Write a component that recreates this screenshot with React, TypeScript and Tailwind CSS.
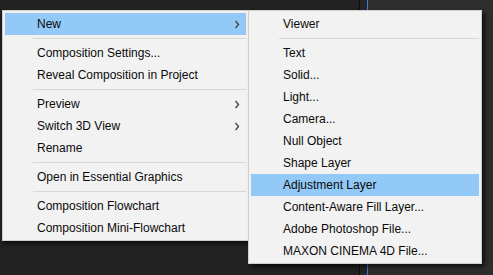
import React from 'react';

// Menu row types
type Row = { label: string; sub?: boolean; active?: boolean } | 'sep';

const mainRows: Row[] = [
  { label: 'New', sub: true, active: true },
  'sep',
  { label: 'Composition Settings...' },
  { label: 'Reveal Composition in Project' },
  'sep',
  { label: 'Preview', sub: true },
  { label: 'Switch 3D View', sub: true },
  { label: 'Rename' },
  'sep',
  { label: 'Open in Essential Graphics' },
  'sep',
  { label: 'Composition Flowchart' },
  { label: 'Composition Mini-Flowchart' },
];

const newRows: Row[] = [
  { label: 'Viewer' },
  'sep',
  { label: 'Text' },
  { label: 'Solid...' },
  { label: 'Light...' },
  { label: 'Camera...' },
  { label: 'Null Object' },
  { label: 'Shape Layer' },
  { label: 'Adjustment Layer', active: true },
  { label: 'Content-Aware Fill Layer...' },
  { label: 'Adobe Photoshop File...' },
  { label: 'MAXON CINEMA 4D File...' },
];

const Chevron = () => (
  <svg width="6" height="9" viewBox="0 0 6 9" className="mr-[6px]">
    <polyline points="1.5,1 4.5,4.5 1.5,8" fill="none" stroke="#4a4a4a" strokeWidth="1.4" />
  </svg>
);

const MenuList = ({ rows }: { rows: Row[] }) => (
  <div className="flex flex-col px-[2px] pt-[2px] pb-[1px]">
    {rows.map((row, i) =>
      row === 'sep' ? (
        <div key={i} className="h-[7px] flex items-center pl-[28px]">
          <div className="h-px w-full bg-[#d7d7d7]" />
        </div>
      ) : (
        <div
          key={i}
          className={`h-[22px] flex items-center justify-between pl-[32px] ${row.active ? 'bg-[#92c9f7]' : ''}`}
        >
          <span className="text-[12px] text-[#0a0a0a]">{row.label}</span>
          {row.sub && <Chevron />}
        </div>
      )
    )}
  </div>
);

export default function App() {
  return (
    <div
      className="relative w-[493px] h-[275px] overflow-hidden flex bg-[#222]"
      style={{ fontFamily: '"Liberation Sans", Arial, sans-serif' }}
    >
      {/* Background panels */}
      <div className="w-[359px] h-full bg-[#222]" />
      <div className="w-px h-full bg-[#0c0c0c]" />
      <div className="w-[7px] h-full bg-[#262626]" />
      <div className="w-px h-full bg-[#3a7fd0]" />
      <div className="flex-1 h-full bg-[#2e2e2e]" />

      {/* Main context menu */}
      <div className="absolute left-[2px] top-[10px] w-[247px] bg-[#f2f2f2] border border-[#cfcfcf] shadow-[1px_3px_4px_rgba(0,0,0,0.6)]">
        <MenuList rows={mainRows} />
      </div>

      {/* New submenu */}
      <div className="absolute left-[248px] top-[10px] w-[234px] bg-[#f2f2f2] border border-[#cfcfcf] shadow-[3px_3px_4px_rgba(0,0,0,0.6)]">
        <MenuList rows={newRows} />
      </div>
    </div>
  );
}
